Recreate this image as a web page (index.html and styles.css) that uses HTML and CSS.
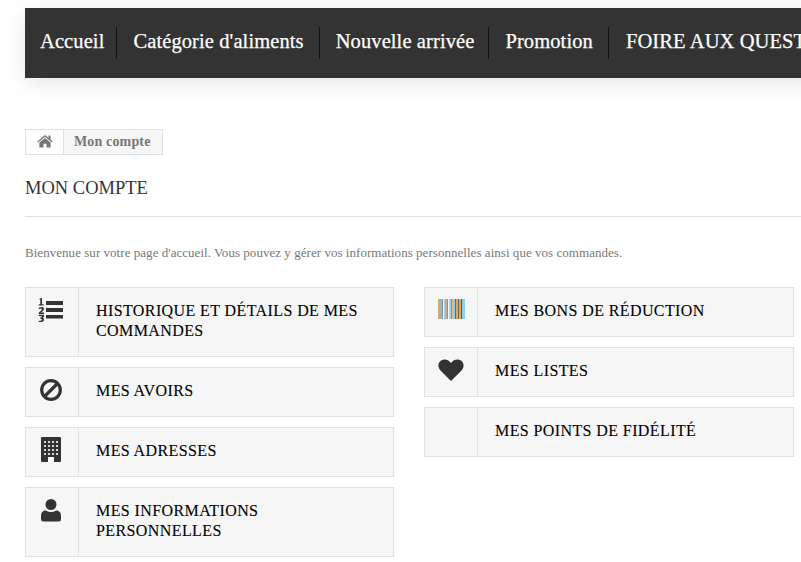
FILE: index.html
```html
<!DOCTYPE html>
<html lang="fr">
<head>
<meta charset="utf-8">
<title>Mon compte</title>
<link rel="stylesheet" href="styles.css">
</head>
<body>
<div class="page">
  <nav class="nav">
    <a class="nav-item">Accueil</a>
    <a class="nav-item">Catégorie d'aliments</a>
    <a class="nav-item">Nouvelle arrivée</a>
    <a class="nav-item">Promotion</a>
    <a class="nav-item">FOIRE AUX QUESTIONS</a>
  </nav>
  <div class="breadcrumb">
    <span class="crumb-home">
      <svg width="16" height="14" viewBox="0 1 16 14"><path fill="#777" d="M8 1 .3 7.400l.8 1L8 2.700l6.900 5.700.8-1L13.500 5.500V1.600h-2v2.200L8 1zM8 4 2.400 8.600V13.500h4.100V9.700h3V13.500h4.100V8.600L8 4z"/></svg>
    </span>
    <span class="crumb-current">Mon compte</span>
  </div>
  <h1 class="title">MON COMPTE</h1>
  <p class="intro">Bienvenue sur votre page d'accueil. Vous pouvez y gérer vos informations personnelles ainsi que vos commandes.</p>
  <div class="columns">
    <ul class="links">
      <li class="link link-tall">
        <span class="link-icon">
          <svg width="26" height="26" viewBox="0 -1 26 26"><g fill="#333"><rect x="8" y="3" width="17" height="4"/><rect x="8" y="10" width="17" height="4"/><rect x="8" y="17" width="17" height="3.500"/><path d="M1.500 .8 4 0V6.200H5.600V7.500H.8V6.200H2.300V1.800H1.500zM.8 9.800Q6 7.500 6 11Q6 12.700 3 14.500H6V16H.8V14.500Q4 12.300 4 11Q4 10 .8 11.200zM.8 16.800H6V18.300Q6 19.500 5 20Q6 20.500 6 21.700Q6 24.500 .8 24V22.700Q4 23.200 4 21.700Q4 20.800 2.300 20.800V19.500Q4 19.500 4 18.600Q4 18.100 .8 18.100z"/></g></svg>
        </span>
        <span class="link-text">HISTORIQUE ET DÉTAILS DE MES COMMANDES</span>
      </li>
      <li class="link">
        <span class="link-icon">
          <svg width="22" height="24" viewBox="0 -2 22 24"><circle cx="11" cy="11" r="9.300" fill="none" stroke="#333" stroke-width="3.200"/><path d="M4.500 17.500 17.500 4.500" stroke="#333" stroke-width="3.200"/></svg>
        </span>
        <span class="link-text">MES AVOIRS</span>
      </li>
      <li class="link">
        <span class="link-icon">
          <svg width="22" height="25" viewBox="0 0 22 25"><rect x="1" width="20" height="25" rx="1" fill="#333"/><g fill="#d5d5d5"><rect x="4" y="4" width="2" height="2"/><rect x="8" y="4" width="2" height="2"/><rect x="12" y="4" width="2" height="2"/><rect x="16" y="4" width="2" height="2"/><rect x="4" y="8" width="2" height="2"/><rect x="8" y="8" width="2" height="2"/><rect x="12" y="8" width="2" height="2"/><rect x="16" y="8" width="2" height="2"/><rect x="4" y="12" width="2" height="2"/><rect x="8" y="12" width="2" height="2"/><rect x="12" y="12" width="2" height="2"/><rect x="16" y="12" width="2" height="2"/><rect x="4" y="16" width="2" height="2"/><rect x="8" y="16" width="2" height="2"/><rect x="12" y="16" width="2" height="2"/><rect x="16" y="16" width="2" height="2"/></g><rect x="8" y="20" width="6" height="5" fill="#fff"/></svg>
        </span>
        <span class="link-text">MES ADRESSES</span>
      </li>
      <li class="link link-tall">
        <span class="link-icon">
          <svg width="20" height="25" viewBox="0 -2 20 25"><circle cx="10" cy="5.500" r="5.500" fill="#333"/><path fill="#333" d="M0 17Q0 11.500 5 11.500Q7 13 10 13Q13 13 15 11.500Q20 11.500 20 17V20Q20 22.500 17.500 22.500H2.500Q0 22.500 0 20z"/></svg>
        </span>
        <span class="link-text">MES INFORMATIONS PERSONNELLES</span>
      </li>
    </ul>
    <ul class="links">
      <li class="link">
        <span class="link-icon">
          <svg width="29" height="22" viewBox="-2 -2 29 22"><g>
            <rect x="0" width="2" height="20" fill="#e0a95a"/><rect x="2" width="2" height="20" fill="#9db4cf"/><rect x="4" width="1" height="20" fill="#8a8f9a"/><rect x="6" width="1" height="20" fill="#a5d5e8"/><rect x="7" width="2" height="20" fill="#d5a88a"/><rect x="9" width="1" height="20" fill="#7d95b0"/><rect x="11" width="2" height="20" fill="#a5d5e8"/><rect x="13" width="1" height="20" fill="#8a8f9a"/><rect x="14" width="1" height="20" fill="#d9b98a"/><rect x="15" width="2" height="20" fill="#8fd0ea"/><rect x="17" width="1" height="20" fill="#666"/><rect x="18" width="2" height="20" fill="#e0a95a"/><rect x="20" width="1" height="20" fill="#666"/><rect x="21" width="2" height="20" fill="#e0a95a"/><rect x="23" width="1" height="20" fill="#555"/><rect x="24" width="3" height="20" fill="#8fd0ea"/>
          </g></svg>
        </span>
        <span class="link-text">MES BONS DE RÉDUCTION</span>
      </li>
      <li class="link">
        <span class="link-icon">
          <svg width="28" height="24" viewBox="-2 -2 28 24"><path fill="#333" d="M13 22 2.500 11.500C-.5 8.500 0 4 2.500 2 5.500-.5 10 0 13 4 16 0 20.500-.5 23.500 2 26 4 26.500 8.500 23.500 11.500z"/></svg>
        </span>
        <span class="link-text">MES LISTES</span>
      </li>
      <li class="link">
        <span class="link-icon"></span>
        <span class="link-text">MES POINTS DE FIDÉLITÉ</span>
      </li>
    </ul>
  </div>
</div>
</body>
</html>
```

FILE: styles.css
```css
* { box-sizing: border-box; }
html, body { margin: 0; height: 100%; }
body { background: #fff; color: #333; font-family: "Liberation Serif", serif; overflow: hidden; }
.page { padding: 8px 0 0 25px; width: 801px; overflow: hidden; height: 562px; }

.nav { display: flex; width: 1100px; height: 70px; padding: 19px 0; background: #333; box-shadow: 0 5px 20px rgba(0,0,0,.1); white-space: nowrap; }
.nav-item { padding: 0 14px 0 16px; height: 32px; line-height: 29px; color: #fff; font-size: 20.500px; letter-spacing: .1px; -webkit-text-stroke: .25px #fff; border-right: 1px solid #111; }
.nav-item:first-child { padding: 0 12px 0 15px; }
.nav-item:nth-child(2) { padding-right: 15px; }
.nav-item:nth-child(4) { padding-right: 15px; }
.nav-item:last-child { border-right: 0; padding-left: 17px; }

.breadcrumb { display: inline-flex; margin-top: 51px; height: 26px; border: 1px solid #e1e1e1; font-size: 14px; letter-spacing: .15px; font-weight: 700; color: #777; vertical-align: top; }
.crumb-home { width: 38px; display: flex; align-items: center; justify-content: center; border-right: 1px solid #e1e1e1; background: #fff; }
.crumb-current { padding: 0 11px 0 10px; line-height: 23px; background: #f6f6f6; }

.title { margin: 18px 0 0; height: 44px; line-height: 31px; font-size: 18.500px; font-weight: 400; color: #333; border-bottom: 1px solid #e1e1e1; }

.intro { margin: 26px 0 0; font-size: 13px; letter-spacing: .04px; line-height: 20px; color: #777; }

.columns { display: flex; gap: 30px; margin-top: 24px; width: 769px; }
.links { flex: 0 0 369px; margin: 0; padding: 0; list-style: none; display: flex; flex-direction: column; gap: 10px; }
.links + .links { flex-basis: 370px; }
.link { display: flex; height: 50px; border: 1px solid #e1e1e1; background: #f6f6f6; color: #000; }
.link-tall { height: 70px; }
.link-icon { flex: 0 0 53px; padding: 9px 2px 0 0; display: flex; justify-content: center; align-items: flex-start; border-right: 1px solid #e1e1e1; }
.link-text { padding: 13px 16px 0 17px; font-size: 16px; letter-spacing: .4px; line-height: 20px; -webkit-text-stroke: .1px #000; }
```
